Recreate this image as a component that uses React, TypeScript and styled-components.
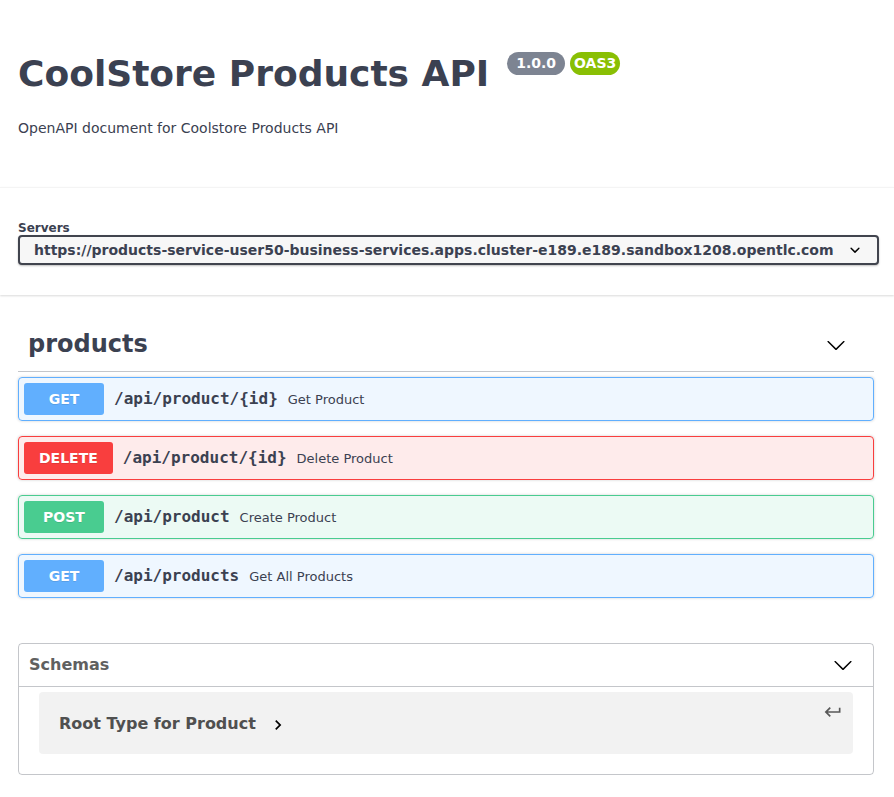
import styled, { createGlobalStyle } from "styled-components";

const GlobalStyle = createGlobalStyle`
  body {
    margin: 0;
    background: #fff;
    font-family: "DejaVu Sans", sans-serif;
    color: #3b4151;
  }
`;

const Wrapper = styled.div`
  padding: 0 20px 0 18px;
`;

const Info = styled.div`
  padding: 53px 0 51px;
`;

const TitleRow = styled.div`
  display: flex;
  align-items: flex-start;
`;

const Title = styled.h2`
  margin: 0;
  font-size: 36px;
  line-height: 42px;
  font-weight: bold;
  color: #3b4151;
`;

const Stamp = styled.span<{ color: string; wide?: boolean }>`
  display: inline-block;
  margin: -1px 0 0 5px;
  padding: ${(p) => (p.wide ? "2px 9px" : "2px 4px")};
  border-radius: 57px;
  background: ${(p) => p.color};
  color: #fff;
  font-size: 14px;
  line-height: 19px;
  font-weight: bold;
  &:first-of-type {
    margin-left: 18px;
  }
`;

const Description = styled.p`
  margin: 25px 0 0;
  font-size: 14px;
  line-height: 16px;
  color: #3b4151;
`;

const SchemeContainer = styled.div`
  border-top: 1px solid #f4f4f4;
  padding: 34px 0 30px;
  box-shadow: 0 1px 2px 0 rgba(0, 0, 0, 0.15);
  margin-bottom: 21px;
`;

const ServersTitle = styled.div`
  font-size: 12px;
  line-height: 12px;
  font-weight: bold;
  color: #3b4151;
  margin-bottom: 1px;
`;

const Select = styled.div`
  box-sizing: border-box;
  width: 861px;
  height: 30px;
  display: flex;
  align-items: center;
  justify-content: space-between;
  padding: 0 12px 0 14px;
  border: 2px solid #41444e;
  border-radius: 4px;
  background: #f7f7f7;
  box-shadow: 0 1px 2px 0 rgba(0, 0, 0, 0.25);
  font-size: 14px;
  font-weight: bold;
  color: #3b4151;
  white-space: nowrap;
`;

const TagHeader = styled.h3`
  margin: 0 0 5px;
  display: flex;
  align-items: center;
  justify-content: space-between;
  padding: 11px 20px 9px 10px;
  border-bottom: 1px solid rgba(59, 65, 81, 0.3);
  font-size: 24px;
  line-height: 35px;
  font-weight: bold;
  color: #3b4151;
  svg {
    margin-right: 8px;
  }
`;

const methodColors: Record<string, [string, string]> = {
  get: ["#61affe", "rgba(97,175,254,.1)"],
  delete: ["#f93e3e", "rgba(249,62,62,.1)"],
  post: ["#49cc90", "rgba(73,204,144,.1)"],
};

const OpBlock = styled.div<{ method: string }>`
  box-sizing: border-box;
  min-height: 44px;
  margin: 0 0 15px;
  border: 1px solid ${(p) => methodColors[p.method][0]};
  background: ${(p) => methodColors[p.method][1]};
  border-radius: 4px;
  box-shadow: 0 0 3px rgba(0, 0, 0, 0.19);
  padding: 5px;
  display: flex;
  align-items: center;
`;

const Method = styled.span<{ method: string }>`
  min-width: 80px;
  box-sizing: border-box;
  padding: 6px 15px;
  border-radius: 3px;
  background: ${(p) => methodColors[p.method][0]};
  color: #fff;
  text-align: center;
  font-size: 14px;
  line-height: 20px;
  font-weight: bold;
  text-shadow: 0 1px 0 rgba(0, 0, 0, 0.1);
`;

const Path = styled.span`
  padding: 0 10px;
  font-family: "DejaVu Sans Mono", monospace;
  font-size: 16px;
  line-height: 20px;
  font-weight: bold;
  color: #3b4151;
`;

const OpSummary = styled.span`
  font-size: 13px;
  color: #3b4151;
`;

const Models = styled.section`
  margin: 45px 0 0;
  border: 1px solid rgba(59, 65, 81, 0.3);
  border-radius: 4px;
  padding-bottom: 20px;
`;

const ModelsHeader = styled.h4`
  margin: 0 0 5px;
  display: flex;
  align-items: center;
  justify-content: space-between;
  padding: 10px 20px 10px 10px;
  border-bottom: 1px solid rgba(59, 65, 81, 0.3);
  font-size: 16px;
  line-height: 22px;
  font-weight: bold;
  color: #606060;
`;

const ModelContainer = styled.div`
  position: relative;
  margin: 0 20px;
  height: 62px;
  padding: 0 20px;
  display: flex;
  align-items: center;
  background: rgba(0, 0, 0, 0.05);
  border-radius: 4px;
`;

const ModelTitle = styled.span`
  font-size: 16px;
  font-weight: bold;
  color: #505050;
`;

const Toggle = styled.svg`
  margin: 4px 0 0 12px;
`;

const JumpTo = styled.svg`
  position: absolute;
  top: 10px;
  right: 10px;
  fill: #333;
  opacity: 0.8;
`;

const LargeArrow = () => (
  <svg width="20" height="20" viewBox="0 0 20 20" fill="#000">
    <path d="M17.418 6.109c.272-.268.709-.268.979 0s.271.701 0 .969l-7.908 7.83c-.27.268-.707.268-.979 0l-7.908-7.830c-.27-.268-.27-.701 0-.969.271-.268.709-.268.979 0L10 13.25l7.418-7.141z" />
  </svg>
);

const ops = [
  { method: "get", path: "/api/product/{id}", summary: "Get Product" },
  { method: "delete", path: "/api/product/{id}", summary: "Delete Product" },
  { method: "post", path: "/api/product", summary: "Create Product" },
  { method: "get", path: "/api/products", summary: "Get All Products" },
];

export default function App() {
  return (
    <>
      <GlobalStyle />
      <Wrapper>
        <Info>
          <TitleRow>
            <Title>CoolStore Products API</Title>
            <Stamp color="#7d8492" wide>
              1.0.0
            </Stamp>
            <Stamp color="#89bf04">OAS3</Stamp>
          </TitleRow>
          <Description>OpenAPI document for Coolstore Products API</Description>
        </Info>
      </Wrapper>
      <SchemeContainer>
        <Wrapper>
          <ServersTitle>Servers</ServersTitle>
          <Select>
            <span>
              https://products-service-user50-business-services.apps.cluster-e189.e189.sandbox1208.opentlc.com
            </span>
            <svg width="20" height="20" viewBox="0 0 20 20" fill="#000">
              <path d="M13.418 7.859a.695.695 0 01.978 0 .68.68 0 010 .969l-3.908 3.83a.697.697 0 01-.979 0l-3.908-3.83a.68.68 0 010-.969.695.695 0 01.978 0L10 11l3.418-3.141z" />
            </svg>
          </Select>
        </Wrapper>
      </SchemeContainer>
      <Wrapper>
        <TagHeader>
          <span>products</span>
          <LargeArrow />
        </TagHeader>
        {ops.map((op, i) => (
          <OpBlock key={i} method={op.method}>
            <Method method={op.method}>{op.method.toUpperCase()}</Method>
            <Path>{op.path}</Path>
            <OpSummary>{op.summary}</OpSummary>
          </OpBlock>
        ))}
        <Models>
          <ModelsHeader>
            <span>Schemas</span>
            <LargeArrow />
          </ModelsHeader>
          <ModelContainer>
            <ModelTitle>Root Type for Product</ModelTitle>
            <Toggle width="20" height="20" viewBox="0 0 24 24" fill="#000">
              <path d="M10 6 8.59 7.41 13.17 12l-4.58 4.59L10 18l6-6z" />
            </Toggle>
            <JumpTo width="20" height="20" viewBox="0 0 24 24">
              <path d="M19 7v4H5.83l3.58-3.59L8 6l-6 6 6 6 1.41-1.41L5.83 13H21V7z" />
            </JumpTo>
          </ModelContainer>
        </Models>
      </Wrapper>
    </>
  );
}
